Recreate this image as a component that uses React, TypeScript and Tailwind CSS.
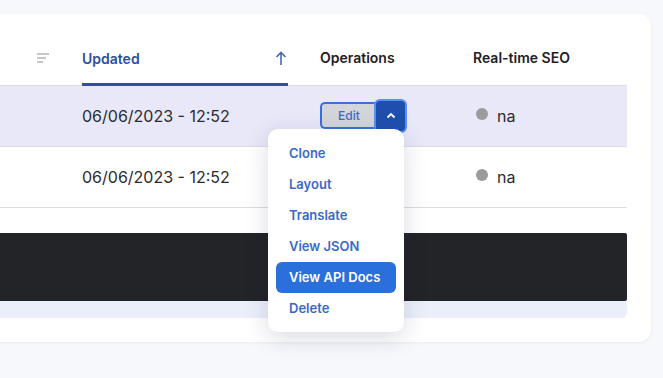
export default function App() {
  const items = ["Clone", "Layout", "Translate", "View JSON", "View API Docs", "Delete"];

  return (
    <div className="w-[663px] h-[378px] bg-[#f7f8fc] pt-[14px] overflow-hidden font-['Inter',sans-serif]">
      <div className="relative w-[651px] h-[328px] bg-white rounded-r-xl shadow-[0_1px_3px_rgba(30,40,80,0.06)] pr-6 pt-4">
        {/* Header */}
        <div className="flex h-[56px] border-b border-[#dcdce4] text-[14px] font-semibold">
          <div className="w-[82px] flex items-center pl-[37px]">
            <svg width="12" height="10" viewBox="0 0 12 10">
              <path d="M0 1h12M0 5h9M0 9h6" stroke="#b4b4ba" strokeWidth="1.6" />
            </svg>
          </div>
          <div className="w-[206px] flex items-center justify-between border-b-[3px] border-[#2a52a3] pt-[3px] mb-[-1px] text-[#2d4f9c]">
            <span>Updated</span>
            <svg width="12" height="15" viewBox="0 0 12 15" className="mr-[1px]">
              <path d="M6 14V1.5M1.5 6L6 1.5 10.5 6" fill="none" stroke="#4a68b4" strokeWidth="1.6" />
            </svg>
          </div>
          <div className="w-[32px]" />
          <div className="w-[153px] flex items-center text-[#1f2024]">Operations</div>
          <div className="flex-1 flex items-center text-[#1f2024]">Real-time SEO</div>
        </div>

        {/* Row 1 */}
        <div className="flex h-[61px] bg-[#e9e8f9] border-b border-[#dcdce4] text-[16px] text-[#2a2b30]">
          <div className="w-[82px]" />
          <div className="w-[206px] flex items-center">06/06/2023 - 12:52</div>
          <div className="w-[32px]" />
          <div className="w-[153px] flex items-center pb-[1px]">
            <div className="flex items-center">
              <button className="h-[27px] w-[56px] bg-[#d4d5db] border-2 border-r-0 border-[#3c6fd8] rounded-l-[5px] text-[12px] text-[#3d6ac9] font-medium">
                Edit
              </button>
              <button className="h-[30px] w-[29px] bg-[#1f4fae] rounded-[4px] ring-2 ring-[#5b8ff2] flex items-center justify-center">
                <svg width="10" height="7" viewBox="0 0 10 7">
                  <path d="M1.5 5.5L5 2l3.5 3.5" fill="none" stroke="white" strokeWidth="1.8" />
                </svg>
              </button>
            </div>
          </div>
          <div className="flex-1 flex items-center gap-[9px] pl-[3px]">
            <span className="w-[12px] h-[12px] rounded-full bg-[#9b9b9d] -mt-[5px]" />
            <span>na</span>
          </div>
        </div>

        {/* Row 2 */}
        <div className="flex h-[61px] border-b border-[#dcdce4] text-[16px] text-[#2a2b30]">
          <div className="w-[82px]" />
          <div className="w-[206px] flex items-center">06/06/2023 - 12:52</div>
          <div className="w-[32px]" />
          <div className="w-[153px]" />
          <div className="flex-1 flex items-center gap-[9px] pl-[3px]">
            <span className="w-[12px] h-[12px] rounded-full bg-[#9b9b9d] -mt-[5px]" />
            <span>na</span>
          </div>
        </div>

        {/* Footer bar */}
        <div className="mt-[25px] h-[68px] bg-[#232428] rounded-r-[2px]" />
        <div className="h-[17px] bg-[#ebeffa] rounded-br-[6px]" />

        {/* Dropdown menu */}
        <div className="absolute left-[268px] top-[115px] w-[136px] bg-white rounded-[10px] pt-[9px] pb-[8px] shadow-[0_6px_24px_rgba(20,30,60,0.16)]">
          {items.map((label) => (
            <div
              key={label}
              className={
                label === "View API Docs"
                  ? "mx-2 h-[31px] px-[13px] flex items-center rounded-[6px] bg-[#2a6fdc] text-white text-[13px] font-semibold"
                  : "mx-2 h-[31px] px-[13px] flex items-center text-[#3b69c8] text-[13px] font-semibold"
              }
            >
              {label}
            </div>
          ))}
        </div>
      </div>
    </div>
  );
}
